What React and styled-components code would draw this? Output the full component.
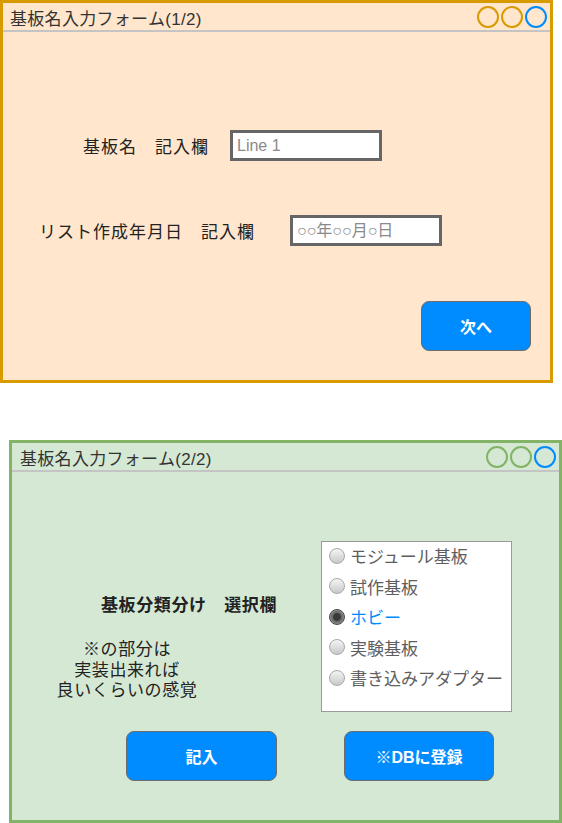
import styled, { createGlobalStyle } from "styled-components";

const GlobalStyle = createGlobalStyle`
    html, body {
        margin: 0;
        padding: 0;
        overflow: hidden;
        background: #ffffff;
    }
    body {
        font-family: "Liberation Sans", "Noto Sans CJK JP", sans-serif;
        color: #333333;
    }
`

const Page = styled.div`
    display: flex;
    flex-direction: column;
    align-items: flex-start;
`

const Window = styled.div`
    box-sizing: border-box;
    width: 553px;
    height: 383px;
    border: 3px solid ${p => p.$border};
    background: ${p => p.$bg};
    display: flex;
    flex-direction: column;
    margin-left: ${p => p.$left || 0}px;
    margin-top: ${p => p.$top || 0}px;
`

const TitleBar = styled.div`
    height: 27px;
    border-bottom: 2px solid #c4c4c4;
    display: flex;
    align-items: center;
    justify-content: space-between;
    padding: 0 3px 0 ${p => p.$pad}px;
`

const Title = styled.span`
    font-size: 17px;
    letter-spacing: 0.3px;
    color: #333;
    padding-top: 2px;
`

const Dots = styled.div`
    display: flex;
    gap: 2px;
`

const Dot = styled.span`
    box-sizing: border-box;
    width: 22px;
    height: 22px;
    border-radius: 50%;
    border: 2.5px solid ${p => p.$color};
`

const Body = styled.div`
    flex: 1;
    display: flex;
    flex-direction: column;
    padding-top: ${p => p.$top}px;
`

const Row = styled.div`
    display: flex;
    align-items: center;
    padding-left: ${p => p.$indent}px;
    margin-bottom: ${p => p.$after || 0}px;
`

const Label = styled.span`
    width: ${p => p.$width}px;
    flex-shrink: 0;
    font-size: 17px;
    letter-spacing: ${p => (p.$bold ? 0.6 : 1)}px;
    color: #222;
    font-weight: ${p => (p.$bold ? 700 : 400)};
`

const Field = styled.input`
    box-sizing: border-box;
    width: 152px;
    height: 31px;
    border: 3px solid #666;
    background: #fff;
    padding: 0 0 0 4px;
    font-family: inherit;
    font-size: 16px;
    outline: none;
    &::placeholder {
        color: #8a8a8a;
    }
`

const Actions = styled.div`
    display: flex;
    justify-content: ${p => p.$justify || "flex-start"};
    gap: ${p => p.$gap || 0}px;
    padding: 0 ${p => p.$right || 0}px 0 ${p => p.$indent || 0}px;
`

const Button = styled.button`
    box-sizing: border-box;
    width: ${p => p.$width}px;
    height: 50px;
    background: #008cff;
    border: 1px solid #6c6c6c;
    border-radius: 8px;
    color: #fff;
    font-family: inherit;
    font-size: 16px;
    font-weight: 700;
    cursor: pointer;
`

const Split = styled.div`
    display: flex;
    margin-bottom: 19px;
`

const Left = styled.div`
    width: 309px;
    display: flex;
    flex-direction: column;
    padding-top: 50px;
`

const Note = styled.div`
    width: 230px;
    margin-top: 24px;
    display: flex;
    flex-direction: column;
    align-items: center;
    font-size: 17px;
    letter-spacing: 0.6px;
    line-height: 20.5px;
    color: #222;
`

const ListBox = styled.div`
    box-sizing: border-box;
    width: 191px;
    height: 171px;
    background: #fff;
    border: 1px solid #9a9a9a;
    padding-left: 7px;
`

const Option = styled.label`
    box-sizing: border-box;
    height: 30.5px;
    padding-bottom: 3px;
    display: flex;
    align-items: center;
    gap: 5px;
    font-size: 17px;
    color: ${p => (p.$active ? "#008cff" : "#5e5e5e")};
`

const Radio = styled.span`
    box-sizing: border-box;
    width: 16px;
    height: 16px;
    border-radius: 50%;
    flex-shrink: 0;
    border: 1px solid ${p => (p.$on ? "#4a4a4a" : "#a8a8a8")};
    background: ${p => p.$on
        ? "radial-gradient(circle, #3a3a3a 0 3.5px, #6e6e6e 4.5px 5.5px, #8a8a8a 6.5px)"
        : "linear-gradient(#f4f4f4, #c9c9c9)"};
`

const options = ["モジュール基板", "試作基板", "ホビー", "実験基板", "書き込みアダプター"]

const App = () => {
    return (
        <Page>
            <GlobalStyle />

            <Window $border="#d79b00" $bg="#ffe6cc">
                <TitleBar $pad={7}>
                    <Title>基板名入力フォーム(1/2)</Title>
                    <Dots>
                        <Dot $color="#d79b00" />
                        <Dot $color="#d79b00" />
                        <Dot $color="#008cff" />
                    </Dots>
                </TitleBar>
                <Body $top={98}>
                    <Row $indent={80} $after={54}>
                        <Label $width={147}>基板名　記入欄</Label>
                        <Field placeholder="Line 1" />
                    </Row>
                    <Row $indent={36} $after={55}>
                        <Label $width={251}>リスト作成年月日　記入欄</Label>
                        <Field placeholder="○○年○○月○日" />
                    </Row>
                    <Actions $justify="flex-end" $right={19}>
                        <Button $width={110}>次へ</Button>
                    </Actions>
                </Body>
            </Window>

            <Window $border="#82b366" $bg="#d5e8d4" $left={9} $top={57}>
                <TitleBar $pad={8}>
                    <Title>基板名入力フォーム(2/2)</Title>
                    <Dots>
                        <Dot $color="#82b366" />
                        <Dot $color="#82b366" />
                        <Dot $color="#008cff" />
                    </Dots>
                </TitleBar>
                <Body $top={69}>
                    <Split>
                        <Left>
                            <Row $indent={89}>
                                <Label $width={200} $bold>基板分類分け　選択欄</Label>
                            </Row>
                            <Note>
                                <span>※の部分は</span>
                                <span>実装出来れば</span>
                                <span>良いくらいの感覚</span>
                            </Note>
                        </Left>
                        <ListBox>
                            {options.map(o => (
                                <Option key={o} $active={o === "ホビー"}>
                                    <Radio $on={o === "ホビー"} />
                                    {o}
                                </Option>
                            ))}
                        </ListBox>
                    </Split>
                    <Actions $indent={114} $gap={67}>
                        <Button $width={151}>記入</Button>
                        <Button $width={150}>※DBに登録</Button>
                    </Actions>
                </Body>
            </Window>
        </Page>
    )
}

export default App
